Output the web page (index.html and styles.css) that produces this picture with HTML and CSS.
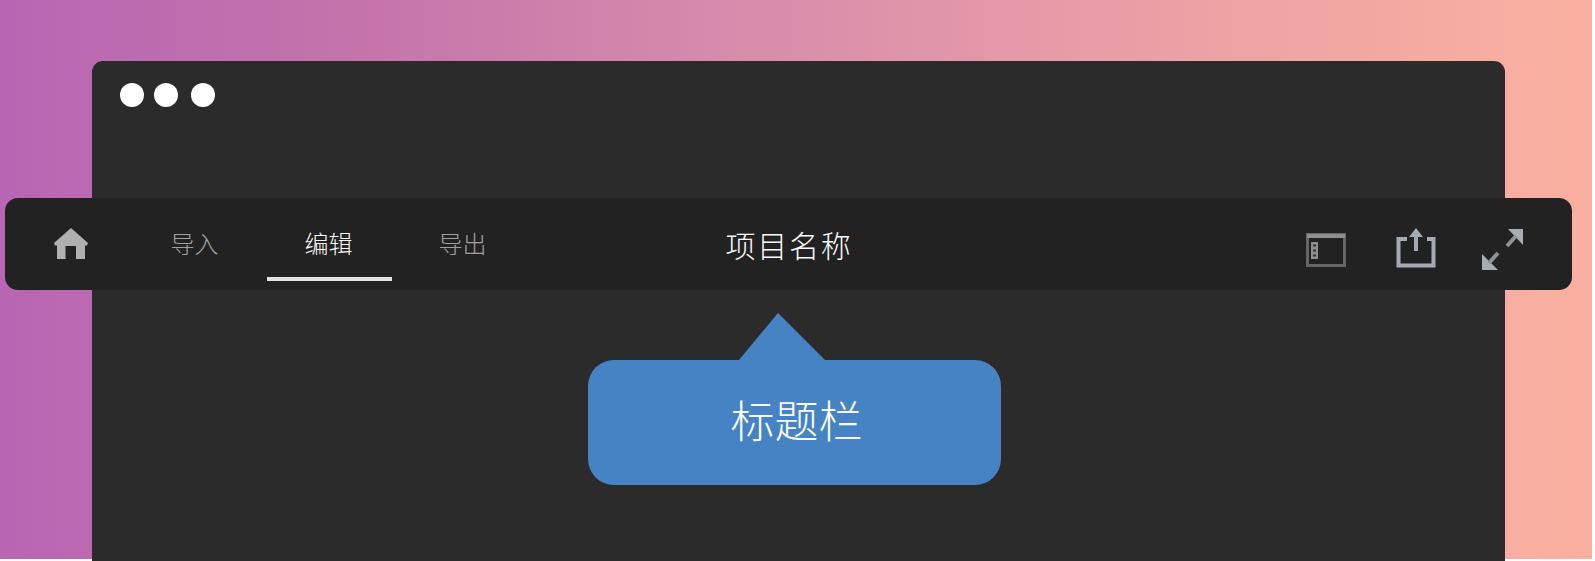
FILE: index.html
```html
<!doctype html>
<html lang="zh-CN">
<head>
	<meta charset="UTF-8">
	<title>标题栏</title>
	<link rel="stylesheet" href="styles.css">
</head>
<body>
	<div class="stage">
		<div class="window">
			<div class="dots">
				<span class="dot"></span>
				<span class="dot"></span>
				<span class="dot dot-last"></span>
			</div>
			<div class="toolbar">
				<div class="toolbar-left">
					<svg class="icon-home" width="34" height="31" viewBox="0 0 34 31">
						<path d="M17 0 L34 15 L33 17.5 H31 V31 H22 V18 H11.500 V31 H3 V17.500 H1 L0 15 Z" fill="#b0b0b0"/>
					</svg>
					<a class="tab">导入</a>
					<a class="tab active">编辑</a>
					<a class="tab">导出</a>
				</div>
				<div class="title">项目名称</div>
				<div class="toolbar-right">
					<svg class="icon-panel" width="40" height="34" viewBox="0 0 40 34">
						<rect x="1.500" y="1.500" width="37" height="31" fill="none" stroke="#666" stroke-width="3"/>
						<rect x="1" y="1" width="38" height="4" fill="#8f8f8f"/>
						<rect x="5" y="9" width="7" height="17" fill="#8e8e8e"/>
						<path d="M7 12.500h3M7 17.500h3M7 22.500h3" stroke="#333" stroke-width="2"/>
					</svg>
					<svg class="icon-share" width="40" height="40" viewBox="0 0 40 40">
						<path d="M11 11 H2.500 V37.500 H37.500 V11 H31" fill="none" stroke="#a6abb3" stroke-width="4"/>
						<path d="M20 6 V23" stroke="#a6abb3" stroke-width="4" fill="none"/>
						<path d="M20 0 L27 9 H13 Z" fill="#a6abb3"/>
					</svg>
					<svg class="icon-expand" width="42" height="42" viewBox="0 0 42 42">
						<path d="M26 0 H41 V16 Z" fill="#a9adb2"/>
						<path d="M34 7 L25 17" stroke="#8f9297" stroke-width="4" fill="none"/>
						<path d="M0 41 V25 L16 41 Z" fill="#a9adb2"/>
						<path d="M7 34 L16 24" stroke="#8f9297" stroke-width="4" fill="none"/>
					</svg>
				</div>
			</div>
			<div class="callout">标题栏</div>
		</div>
	</div>
</body>
</html>
```

FILE: styles.css
```css
* { padding: 0; margin: 0; box-sizing: border-box; }
html, body { height: 100%; }
body { background: #fff; overflow: hidden; font-family: "Noto Sans CJK SC", "Liberation Sans", sans-serif; }

.stage { width: 1592px; height: 559px; padding: 61px 0 0 92px; background: linear-gradient(90deg, #b866b3 0%, #c573ab 22%, #d78aab 45%, #e69aa8 65%, #f2a8a2 85%, #fab0a0 100%); }

.window { width: 1413px; height: 500px; border-radius: 11px 11px 0 0; background: #2b2b2b; padding-top: 22px; }

.dots { display: flex; gap: 10px; padding-left: 28px; }
.dot { width: 24px; height: 24px; border-radius: 50%; background: #fff; }
.dot-last { margin-left: 3px; }

.toolbar { display: grid; grid-template-columns: 1fr auto 1fr; align-items: center; height: 92px; margin: 91px -67px 0 -87px; padding: 0 48px 0 49px; border-radius: 13px; background: #222; }

.toolbar-left { display: flex; align-items: center; height: 100%; }
.icon-home { margin-right: 45px; margin-bottom: 2px; }
.tab { display: flex; align-items: center; justify-content: center; width: 125px; height: 83px; margin-right: 9px; margin-bottom: 9px; padding: 9px 2px 0 0; border-bottom: 4px solid transparent; font-size: 24px; font-weight: 300; color: #a0a0a0; }
.tab.active { color: #fafafa; border-bottom-color: #e2e2e2; }

.title { font-size: 30px; font-weight: 300; letter-spacing: 1.8px; color: #fafafa; }

.toolbar-right { display: flex; align-items: center; justify-content: flex-end; }
.icon-panel { margin-right: 50px; margin-top: 12px; }
.icon-share { margin-right: 46px; margin-top: 8px; }
.icon-expand { margin-top: 12px; }

.callout { position: relative; display: flex; align-items: center; justify-content: center; width: 413px; height: 125px; margin: 70px 0 0 496px; padding: 0 0 8px 4px; border-radius: 26px; background: #4583c4; color: #fbfcfd; font-size: 44px; font-weight: 300; }
.callout::before { content: ""; position: absolute; left: 151px; top: -47px; width: 86px; height: 47px; background: #4583c4; clip-path: polygon(0 100%, 39px 0, 100% 100%); }
```
